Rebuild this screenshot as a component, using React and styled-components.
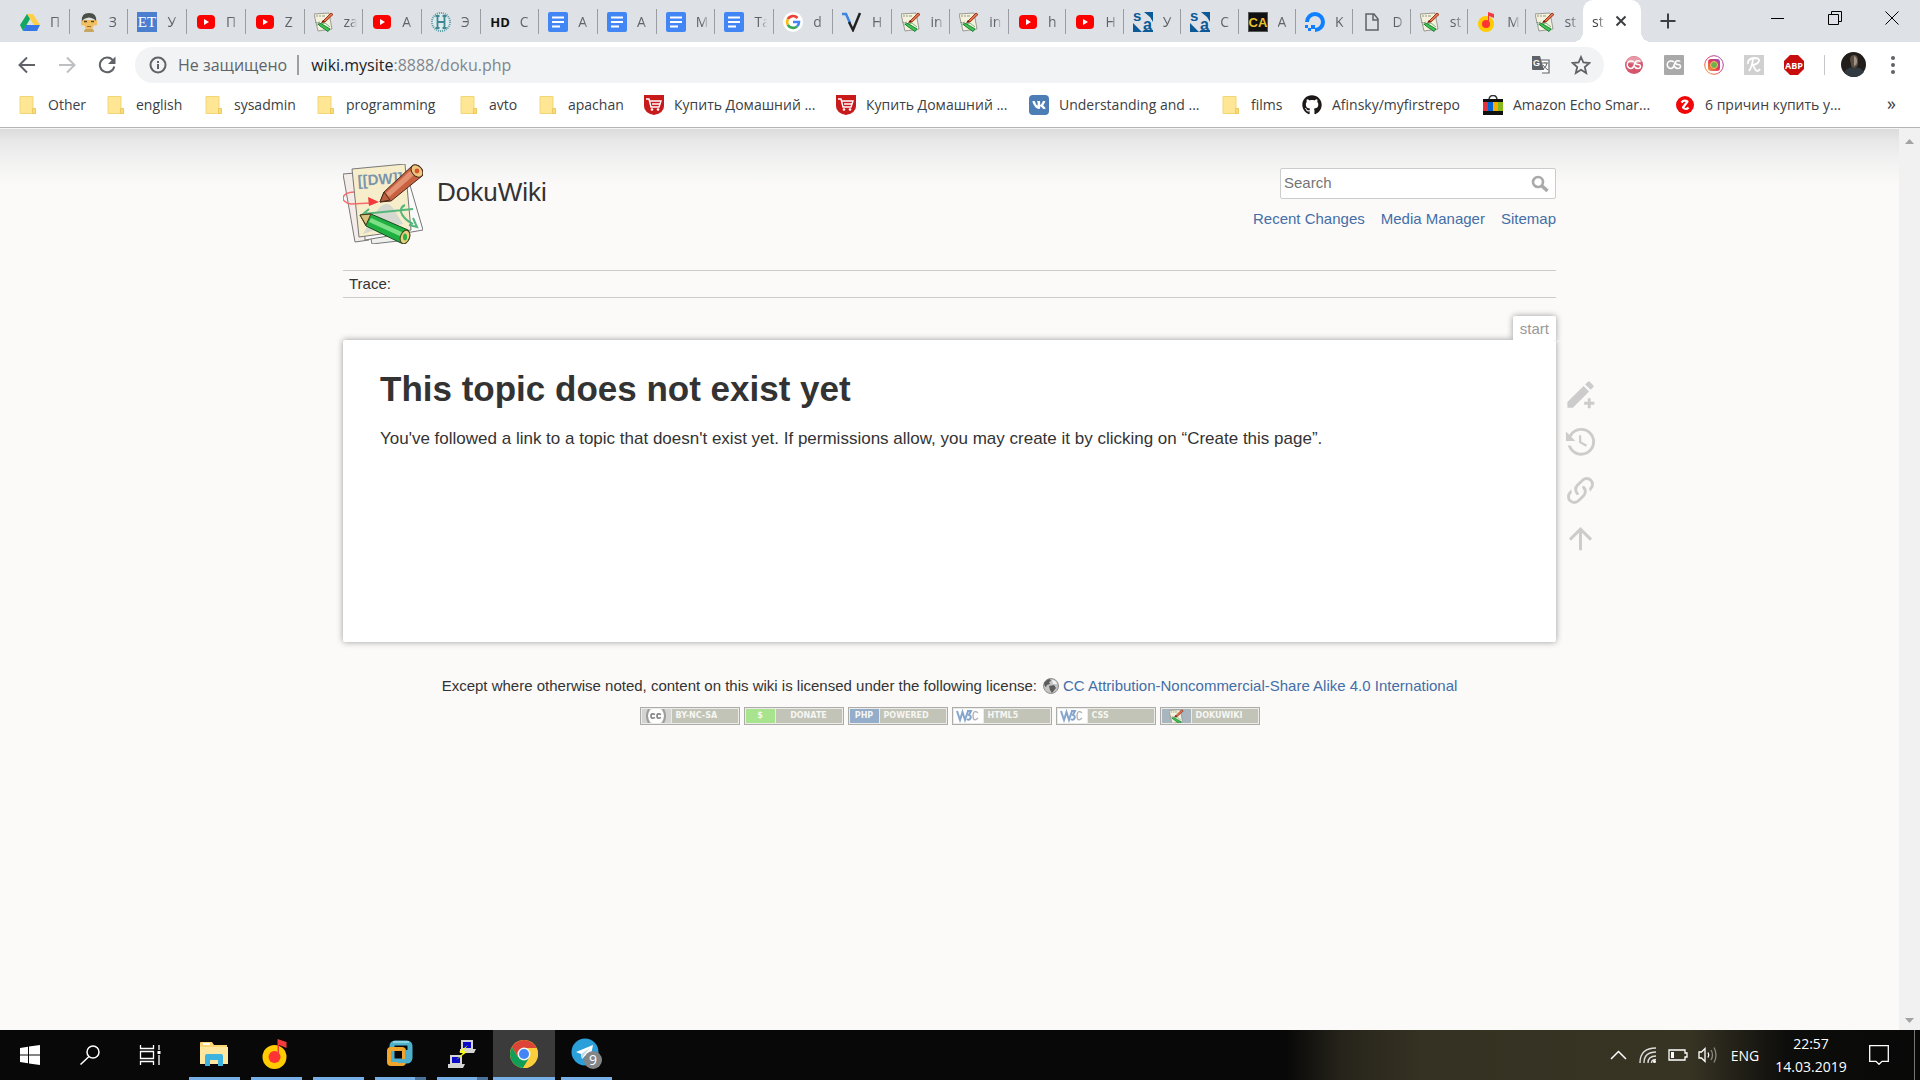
import React from "react";
import styled, { createGlobalStyle, css } from "styled-components";
import { FaGithub, FaVk } from "react-icons/fa";

const ui = `"Segoe UI", "Open Sans", "Noto Sans", sans-serif`;
const wiki = `Arial, "Liberation Sans", sans-serif`;

const GlobalStyle = createGlobalStyle`
  *, *::before, *::after { box-sizing: border-box; }
  body { margin: 0; background: #fbfaf9; }
  button { border: 0; padding: 0; background: none; font: inherit; color: inherit; }
  svg { display: block; flex: none; }
  h1, p { margin: 0; }
`;

/* ---------- window ---------- */

const Window = styled.div`
  display: flex;
  flex-direction: column;
  min-height: 100vh;
  font-family: ${ui};
  font-size: 14px;
`;

/* ---------- tab strip ---------- */

const TabStrip = styled.div`
  display: flex;
  height: 42px;
  padding-left: 11px;
  background: #dee1e6;
  color: #5f6368;
`;

const TabList = styled.div`
  flex: 1;
  min-width: 0;
  display: grid;
  grid-template-columns: repeat(17, minmax(0, 45fr)) repeat(10, minmax(0, 44fr));
`;

const Tab = styled.button`
  display: flex;
  align-items: center;
  gap: 10px;
  padding-left: 9px;
  margin: 9px 0 8px;
  border-right: 1px solid ${(p) => (p.$last ? "transparent" : "#9a9da1")};
  min-width: 0;
`;

const TabTitle = styled.span`
  width: 16px;
  white-space: nowrap;
  text-align: left;
  mask-image: linear-gradient(to right, #000 6px, transparent 13px);
`;

const ActiveTab = styled.div`
  position: relative;
  display: flex;
  align-items: center;
  justify-content: space-between;
  width: 58px;
  padding: 0 12px 0 9px;
  background: #fff;
  border-radius: 10px 10px 0 0;
  color: #3c4043;

  &::before, &::after {
    content: "";
    position: absolute;
    bottom: 0;
    width: 10px;
    height: 10px;
  }
  &::before { right: 100%; background: radial-gradient(circle at 0 0, transparent 10px, #fff 10px); }
  &::after { left: 100%; background: radial-gradient(circle at 100% 0, transparent 10px, #fff 10px); }
`;

const IconButton = styled.button`
  display: flex;
  align-items: center;
  justify-content: center;
  width: ${(p) => p.$w || 40}px;
  height: ${(p) => p.$h || 40}px;
  flex: none;
`;

const WindowControls = styled.div`
  display: flex;
  margin-left: 54px;
  color: #000;
`;

/* ---------- toolbar ---------- */

const Toolbar = styled.div`
  display: flex;
  align-items: center;
  height: 45px;
  padding: 0 7px;
  background: #fff;
  color: #5f6368;
`;

const Omnibox = styled.div`
  flex: 1;
  display: flex;
  align-items: center;
  height: 36px;
  margin: 0 10px 0 8px;
  padding: 0 3px 0 14px;
  border-radius: 18px;
  background: #f1f3f4;
  font-size: 16px;
`;

const Security = styled.span`
  margin-left: 11px;
  padding-right: 10px;
  border-right: 2px solid #9aa0a6;
  line-height: 20px;
`;

const Address = styled.span`
  flex: 1;
  margin-left: 12px;
  color: #80868b;
  b { font-weight: 400; color: #202124; }
`;

const Rule = styled.span`
  width: 1px;
  height: 20px;
  margin: 0 8px 0 10px;
  background: #c4c6c9;
`;

/* ---------- bookmarks ---------- */

const Bookmarks = styled.nav`
  display: flex;
  align-items: center;
  height: 41px;
  padding: 0 24px 5px 18px;
  background: #fff;
  border-bottom: 1px solid #b6b4b6;
  color: #3c4043;
`;

const Bookmark = styled.a`
  display: flex;
  align-items: center;
  gap: 10px;
  width: ${(p) => p.$w}px;
  color: inherit;
  text-decoration: none;
  white-space: nowrap;
`;

const More = styled.button`
  margin-left: auto;
  padding-bottom: 4px;
  font-size: 18px;
  line-height: 18px;
`;

/* ---------- page ---------- */

const Viewport = styled.div`
  flex: 1;
  display: flex;
`;

const Page = styled.div`
  flex: 1;
  display: grid;
  grid-template-columns: minmax(48px, 1fr) minmax(0, 1213px) minmax(48px, 1fr);
  grid-template-rows: auto auto 1fr;
  border-top: 1px solid #f4f4f4;
  background: linear-gradient(#dbdbdb 0, #e8e8e8 12px, #efefef 26px, #fbfaf9 56px);
  color: #333;
  font-family: ${wiki};
  font-size: 15px;
`;

const Header = styled.header`
  grid-column: 2;
  padding-top: 35px;
`;

const HeaderRow = styled.div`
  display: flex;
  justify-content: space-between;
  height: 106px;
`;

const Brand = styled.a`
  display: flex;
  gap: 14px;
  height: 81px;
  color: #333;
  text-decoration: none;
`;

const BrandName = styled.span`
  padding-top: 13px;
  font-size: 26px;
  line-height: 30px;
`;

const HeaderTools = styled.div`
  display: flex;
  flex-direction: column;
  align-items: flex-end;
  gap: 11px;
  padding-top: 4px;
`;

const SearchForm = styled.form`
  display: flex;
  align-items: center;
  width: 276px;
  height: 31px;
  border: 1px solid #ccc;
  border-radius: 2px;
  background: #fff;
`;

const SearchInput = styled.input`
  flex: 1;
  min-width: 0;
  padding: 0 0 2px 3px;
  border: 0;
  outline: 0;
  background: none;
  color: #333;
  font: 15px/18px ${wiki};
  &::placeholder { color: #757575; opacity: 1; }
`;

const linkColor = css`
  color: #436ea7;
  text-decoration: none;
`;

const SiteLinks = styled.nav`
  display: flex;
  gap: 16px;
  line-height: 18px;
  a { ${linkColor} }
`;

const Trace = styled.div`
  padding: 4px 6px;
  border: solid #ccc;
  border-width: 1px 0;
  line-height: 18px;
`;

const Main = styled.main`
  grid-column: 2;
  padding-top: 18px;
`;

const PageId = styled.div`
  position: relative;
  width: fit-content;
  margin-left: auto;
  padding: 2px 7px 0;
  height: 24px;
  border-radius: 2px 2px 0 0;
  background: #fff;
  box-shadow: 0 0 6px #999;
  clip-path: inset(-8px -8px 0 -8px);
  color: #999;
  line-height: 22px;
  z-index: 1;
`;

const Article = styled.article`
  min-height: 302px;
  padding: 29px 37px;
  border-radius: 2px;
  background: #fff;
  box-shadow: 0 0 6px #999;

  h1 { font-size: 35px; line-height: 40px; }
  p { margin-top: 18px; font-size: 17px; line-height: 24px; }
`;

const PageTools = styled.aside`
  grid-column: 3;
  display: flex;
  flex-direction: column;
  gap: 13px;
  padding: 79px 0 0 7px;
  color: #ccc;
`;

const ToolLink = styled.a`
  display: block;
  width: 35px;
  height: 35px;
  color: inherit;
`;

const Footer = styled.footer`
  grid-column: 2;
  padding-top: 33px;
  text-align: center;
`;

const License = styled.div`
  display: flex;
  justify-content: center;
  align-items: center;
  gap: 6px;
  line-height: 22px;
  a { ${linkColor} display: flex; align-items: center; gap: 4px; }
`;

const Badges = styled.div`
  display: flex;
  justify-content: center;
  gap: 4px;
  margin-top: 10px;
`;

const Badge = styled.a`
  display: flex;
  gap: 1px;
  width: 100px;
  height: 18px;
  padding: 1px;
  border: 1px solid #acacaa;
  background: #ecebe8;
  font: bold 8px/14px "DejaVu Sans", Verdana, sans-serif;
  color: #f6f6f2;
  text-decoration: none;
`;

const BadgeMark = styled.span`
  display: flex;
  align-items: center;
  justify-content: center;
  width: 29px;
  overflow: hidden;
  background: ${(p) => p.$bg};
`;

const BadgeText = styled.span`
  flex: 1;
  background: #c2c4b8;
  text-align: ${(p) => p.$align || "center"};
  padding: 0 4px;
`;

const Scrollbar = styled.div`
  display: flex;
  flex-direction: column;
  justify-content: space-between;
  width: 21px;
  background: #f1f1f1;
  color: #a3a3a3;
`;

/* ---------- taskbar ---------- */

const Taskbar = styled.footer`
  display: flex;
  align-items: stretch;
  height: 50px;
  background: linear-gradient(to right, #080808 67%, #27251b 70%, #353223 74%, #373424 88%, #0d0d0b 93%, #080808 100%);
  color: #fff;
`;

const Apps = styled.div`
  display: flex;
  margin-left: 3px;
`;

const AppButton = styled.button`
  display: flex;
  flex-direction: column;
  align-items: center;
  width: 62px;
  background: ${(p) => (p.$active ? "#3b3b3b" : "none")};
`;

const AppIcon = styled.span`
  flex: 1;
  display: flex;
  align-items: center;
`;

const AppLine = styled.span`
  width: ${(p) => (p.$wide ? 62 : 51)}px;
  height: 3px;
  background: ${(p) => (p.$stacked ? "linear-gradient(to right, #76b0e6 40px, #4b7399 40px)" : "#76b0e6")};
`;

const Tray = styled.div`
  display: flex;
  margin-left: auto;
`;

const Language = styled.button`
  width: 44px;
`;

const Clock = styled.button`
  width: 88px;
  line-height: 23px;
  text-align: center;
`;

const ShowDesktop = styled.button`
  width: 6px;
  margin-left: 11px;
  border-left: 1px solid #77756e;
`;

/* ---------- drawings ---------- */

const DokuLogo = ({ size = 80 }) => (
  <svg width={size} height={size} viewBox="0 0 80 80">
    <path d="M0 10 L12 9 L26 76 L12 78 Z" fill="#f3ece9" stroke="#777" />
    <path d="M27 70 L62 67 L64 76 L29 80 Z" fill="#eef0ec" stroke="#777" />
    <path d="M20 6 L62 4 L80 66 L22 76 Z" fill="#fafafa" stroke="#777" />
    <path d="M9 5 L62 0 L68 66 L16 73 Z" fill="#f6edcb" stroke="#777" />
    <path d="M36 44 Q44 36 50 44 L60 60 L38 64 L20 70 Z" fill="#d5d8cf" />
    <text x="15" y="22" fontFamily="Liberation Sans" fontWeight="bold" fontSize="15" fill="#7b95ab" transform="rotate(-4 15 22)">[[DW]]</text>
    <path d="M11 28 C-3 29 -3 38 8 40 L28 39" fill="none" stroke="#f56a6a" strokeWidth="1.500" />
    <path d="M25 33 L36 38 L26 42 Z" fill="#f23a3a" />
    <path d="M20 50 L70 45 M62 41 C52 46 62 56 70 60 M70 54 L74 63 L66 61 M26 45 L19 51" fill="none" stroke="#55b67c" strokeWidth="2" />
    <path d="M37 38 L41 28 L69 2 C75 -2 83 7 79 12 L48 37 Z" fill="#c8613f" stroke="#4a2a1c" />
    <path d="M43 29 L67 7 L71 11 L46 33 Z" fill="#e39373" />
    <path d="M37 38 L41 28 L47 36 Z" fill="#b9603f" stroke="#4a2a1c" />
    <ellipse cx="74" cy="7" rx="5" ry="7" fill="#ecc780" stroke="#4a2a1c" transform="rotate(-40 74 7)" />
    <circle cx="74" cy="7" r="2.400" fill="#d4562b" />
    <path d="M17 51 L28 50 L65 66 C69 72 66 80 58 79 L23 62 Z" fill="#1eb141" stroke="#1b4a22" />
    <path d="M28 54 L61 69 L59 73 L26 58 Z" fill="#7ddf86" />
    <path d="M17 51 L28 50 L23 61 Z" fill="#d9c27d" stroke="#4a3a1c" />
    <ellipse cx="62" cy="73" rx="4.500" ry="7" fill="#efcf7d" stroke="#3a4a1c" transform="rotate(20 62 73)" />
    <ellipse cx="62" cy="73" rx="2" ry="3.500" fill="#26b345" />
  </svg>
);

const DokuIcon = ({ size = 20 }) => (
  <svg width={size} height={size} viewBox="0 0 20 20">
    <path d="M0 2l15-1 3 16-14 2z" fill="#f4f1dc" stroke="#86867c" strokeWidth="0.800" />
    <path d="M2 4h2M5 4h2M8 4h3M1 10q2 2 5 0" fill="none" stroke="#8d9a86" />
    <path d="M3 13l8-2 5 4" fill="none" stroke="#77b98b" />
    <path d="M8 10L17 1l2 1.500L11 10z" fill="#e0764f" stroke="#9b2d12" strokeWidth="0.900" />
    <path d="M7 11l2-3 2 2z" fill="#7a1d0c" />
    <path d="M4 12l3-.5 9 5.500-2 2.500L6 14z" fill="#3fc153" stroke="#157a2a" strokeWidth="0.900" />
  </svg>
);

const Drive = () => (
  <svg width="20" height="20" viewBox="0 0 20 20">
    <path d="M7 2h6l7 11h-6z" fill="#ffcf48" />
    <path d="M7 2l3 5-7 12-3-6z" fill="#11a861" />
    <path d="M6 13h14l-3 6H3z" fill="#3777e3" />
  </svg>
);

const Face = () => (
  <svg width="20" height="20" viewBox="0 0 20 20">
    <path d="M5 20q0-4 5-4t5 4z" fill="#c9a660" />
    <path d="M2 8h16v5q-2 1-3 0l-2 4H7l-2-4q-1 1-3 0z" fill="#f0bf62" />
    <path d="M3 9q-1-8 7-8t7 8q-2-3-7-3.500Q5 6 3 9z" fill="#4b4f4a" />
    <path d="M5 9.500h3M12 9.500h3" stroke="#57431c" strokeWidth="1.500" />
    <path d="M8 14.500h4" stroke="#9a6a2a" />
  </svg>
);

const LetterIcon = ({ text, bg, fg, family, size = 12, bold, dotted }) => (
  <svg width="20" height="20" viewBox="0 0 20 20">
    <rect width="20" height="20" fill={bg} />
    {dotted && <rect x="0.500" y="0.500" width="19" height="19" fill="none" stroke="#999" strokeDasharray="1 1" />}
    <text x="10" y="15" fontSize={size} fontFamily={family} fontWeight={bold ? "bold" : "normal"} fill={fg} textAnchor="middle">{text}</text>
  </svg>
);

const YouTube = () => (
  <svg width="20" height="20" viewBox="0 0 20 20">
    <rect x="1" y="3" width="18" height="14" rx="4" fill="#f00" />
    <path d="M8 7l5 3-5 3z" fill="#fff" />
  </svg>
);

const Habr = () => (
  <svg width="20" height="20" viewBox="0 0 20 20">
    <circle cx="10" cy="10" r="9" fill="#dfeaec" stroke="#5b9aa5" strokeWidth="2" strokeDasharray="1 1" />
    <path d="M6.500 4v12M13.500 4v12M6.500 10h7M4.500 4h4M11.500 4h4M4.500 16h4M11.500 16h4" stroke="#3d8793" strokeWidth="1.800" />
  </svg>
);

const Docs = () => (
  <svg width="20" height="20" viewBox="0 0 20 20">
    <rect width="20" height="20" rx="2" fill="#4285f4" />
    <path d="M4 5.500h12M4 10h12M4 14.500h8" stroke="#fff" strokeWidth="2" />
  </svg>
);

const Google = () => (
  <svg width="20" height="20" viewBox="0 0 20 20" fill="none" strokeWidth="2.600">
    <circle cx="10" cy="10" r="10" fill="#fff" />
    <path d="M14.500 6A6 6 0 0 0 4.800 7.200" stroke="#ea4335" />
    <path d="M4.800 7.200A6 6 0 0 0 4.800 12.800" stroke="#fbbc05" />
    <path d="M4.800 12.800A6 6 0 0 0 14 14.400" stroke="#34a853" />
    <path d="M14 14.400A6 6 0 0 0 16 10H10" stroke="#4285f4" />
  </svg>
);

const Check = () => (
  <svg width="20" height="20" viewBox="0 0 20 20" fill="none" strokeWidth="2.500">
    <path d="M0 2h4l4 9" stroke="#3a86e0" />
    <path d="M7 10l4 8L18 1" stroke="#222" />
  </svg>
);

const Sa = () => (
  <svg width="20" height="20" viewBox="0 0 20 20">
    <path d="M11 0h9v10l-3-5zM0 11l4 4 5 5H0z" fill="#0b5a97" />
    <path d="M9 20l2-2h9v2z" fill="#0b5a97" />
    <text x="0" y="9" fontSize="15" fontWeight="bold" fontFamily="Liberation Sans" fill="#0b5a97">s</text>
    <text x="10" y="18" fontSize="16" fontWeight="bold" fontFamily="Liberation Sans" fill="#0b5a97">a</text>
  </svg>
);

const Ocean = () => (
  <svg width="20" height="20" viewBox="0 0 20 20">
    <path d="M2 10a8 8 0 1 1 8 8" fill="none" stroke="#0f80ff" strokeWidth="4" />
    <path d="M6 13h4v4H6zM3 16h3v3H3zM0 13h3v3H0z" fill="#0f80ff" />
  </svg>
);

const FileIcon = () => (
  <svg width="20" height="20" viewBox="0 0 20 20" fill="none" stroke="#5f6368" strokeWidth="1.500">
    <path d="M4 2h8l4 5v11H4zM11 2v6h5" />
  </svg>
);

const Music = ({ size = 20 }) => (
  <svg width={size} height={size} viewBox="0 0 20 20">
    <circle cx="9" cy="12" r="8" fill="#fc0" />
    <circle cx="9" cy="12" r="4" fill="#f33" />
    <path d="M11 12V0l6 2v4l-5-2v8z" fill="#f33b3b" />
  </svg>
);

const Folder = () => (
  <svg width="20" height="20" viewBox="0 0 20 20">
    <path d="M2 1.500h13v12h2V18.500H2z" fill="#ffe694" stroke="#f2d675" />
    <path d="M14.500 18.500v-5h3v5z" fill="#fbdc78" stroke="#ebc95c" />
  </svg>
);

const Cart = () => (
  <svg width="20" height="20" viewBox="0 0 20 20">
    <path d="M0 0h20v11q0 7-10 9Q0 18 0 11z" fill="#c8191b" />
    <path d="M2 4h3l2 8h8l2-6H6M8 9h8" fill="none" stroke="#fff" strokeWidth="1.400" />
    <circle cx="8" cy="14.500" r="1.300" fill="#fff" />
    <circle cx="14" cy="14.500" r="1.300" fill="#fff" />
  </svg>
);

const Vk = () => (
  <svg width="20" height="20" viewBox="0 0 20 20">
    <rect width="20" height="20" rx="4" fill="#4d7db5" />
    <FaVk x="3" y="3" width="14" height="14" color="#fff" />
  </svg>
);

const Bag = () => (
  <svg width="20" height="20" viewBox="0 0 20 20">
    <path d="M6 5q0-4.500 4-4.500T14 5" fill="none" stroke="#333" strokeWidth="1.400" />
    <path d="M0 4h20v16H0z" fill="#111" />
    <path d="M0 7h5v9H0z" fill="#e53238" />
    <path d="M5 7h5v9H5z" fill="#0064d2" />
    <path d="M10 7h5v9h-5z" fill="#f5af02" />
    <path d="M15 7h5v9h-5z" fill="#86b817" />
  </svg>
);

const RedZ = () => (
  <svg width="20" height="20" viewBox="0 0 20 20">
    <circle cx="10" cy="10" r="9" fill="#f00808" />
    <path d="M6.500 7.500Q9 4.500 12.500 6.500L8 12.500Q11 15.500 13.500 12.500" fill="none" stroke="#fff" strokeWidth="2.200" strokeLinejoin="round" />
  </svg>
);

const Stroke = ({ size = 20, w = 2, box = 24, children, color = "currentColor" }) => (
  <svg width={size} height={size} viewBox={`0 0 ${box} ${box}`} fill="none" stroke={color} strokeWidth={w}>
    {children}
  </svg>
);

const Fill = ({ size, d }) => (
  <svg width={size} height={size} viewBox="0 0 24 24" fill="currentColor"><path d={d} /></svg>
);

const Translate = () => (
  <svg width="20" height="20" viewBox="0 0 20 20">
    <path d="M9 5h9v13h-7" fill="#fff" stroke="#5f6368" strokeWidth="1.200" />
    <path d="M1 1h8l4 14H2q-1 0-1-1z" fill="#5f6368" />
    <text x="2" y="11" fontSize="9" fontWeight="bold" fontFamily="Liberation Sans" fill="#fff">G</text>
    <path d="M11 8h6M14 7v1M16 8q-1 5-4 6M12 10q2 3 5 5" fill="none" stroke="#5f6368" />
  </svg>
);

const Lastfm = ({ round }) => (
  <svg width="20" height="20" viewBox="0 0 20 20">
    {round ? <circle cx="10" cy="10" r="9" fill="#d4566c" /> : <rect width="20" height="20" rx="1" fill="#a9a9a9" />}
    {round && <path d="M2 7a8.500 8.500 0 0 1 16 0q-8 3-16 0z" fill="#e59aa6" />}
    <path d="M10 7q-1-1-3-1a3.500 3.500 0 1 0 0 7.500q2 0 3-3t1-3q1-1.800 3-1.800 2 0 2 1M10 11q1.500 2.500 4 2.500 2.500 0 2.500-2t-2.500-2q-2.500 0-2.500-1.800 0-2 2.500-2" fill="none" stroke="#fff" strokeWidth="1.500" />
  </svg>
);

const Insta = () => (
  <svg width="20" height="20" viewBox="0 0 20 20">
    <defs>
      <linearGradient id="ig" x1="0" y1="1" x2="1" y2="0">
        <stop offset="0" stopColor="#f5a13a" />
        <stop offset="0.5" stopColor="#e5375e" />
        <stop offset="1" stopColor="#8d4bc4" />
      </linearGradient>
    </defs>
    <circle cx="10" cy="10" r="9.300" fill="#fff" stroke="url(#ig)" />
    <rect x="4" y="4" width="12" height="12" rx="3" fill="url(#ig)" />
    <circle cx="10" cy="10" r="3.500" fill="#6fae4c" stroke="#f7c15a" />
  </svg>
);

const Script = () => (
  <svg width="20" height="20" viewBox="0 0 20 20">
    <rect width="20" height="20" fill="#d0d0d0" />
    <path d="M9 4q-1 8-4 12M4 9q-1-5 6-6 6 0 5 3-1 3-6 4 2 5 4 6 2 0 3-2" fill="none" stroke="#fff" strokeWidth="1.800" />
  </svg>
);

const Abp = () => (
  <svg width="20" height="20" viewBox="0 0 20 20">
    <path d="M6 0h8l6 6v8l-6 6H6l-6-6V6z" fill="#c70d0d" />
    <text x="10" y="13.500" textAnchor="middle" fontSize="9" fontWeight="bold" fontFamily="Open Sans" fill="#fff">ABP</text>
  </svg>
);

const Avatar = () => (
  <svg width="25" height="25" viewBox="0 0 25 25">
    <circle cx="12.500" cy="12.500" r="12.500" fill="#211d1a" />
    <path d="M9 8q0-5 4-5t4 5v4q-1 4-4 4t-3-4z" fill="#5b4f45" />
    <path d="M13 4q3 1 3 5t-3 5z" fill="#a39384" />
    <path d="M3 20q5-6 10-4 6-2 10 4-4 5-10 5T3 20z" fill="#303a40" />
  </svg>
);

const Magnifier = () => (
  <svg width="18" height="18" viewBox="0 0 18 18" fill="none" stroke="#aaa">
    <circle cx="7" cy="7" r="5" strokeWidth="2.600" />
    <path d="M11 11l5.500 5" strokeWidth="3.600" />
  </svg>
);

const Globe = () => (
  <svg width="16" height="16" viewBox="0 0 16 16">
    <circle cx="8" cy="8" r="7.500" fill="#c4c4c4" stroke="#909090" />
    <path d="M1 5q3-4 6-4l1 2-2 1 1 2-3 1-1 2Q1 8 1 5zM6 8l5-1 2 3-4 5-2-3z" fill="#5c5c5c" />
    <path d="M9 2q4 0 5 4l-4 0z" fill="#f2f2f2" />
  </svg>
);

const CcMark = () => (
  <svg width="24" height="14" viewBox="0 0 24 14">
    <circle cx="12" cy="7" r="8" fill="#fff" />
    <path d="M5 0q-4 7 0 14M19 0q4 7 0 14" fill="none" stroke="#9d9d9d" strokeWidth="2" />
    <path d="M11 5.500q-4-2-4 1.500t4 1.500M17 5.500q-4-2-4 1.500t4 1.500" fill="none" stroke="#888" strokeWidth="1.800" />
  </svg>
);

const W3c = () => (
  <svg width="24" height="14" viewBox="0 0 24 14" fill="none">
    <path d="M1 2l3 9 2.500-8L9 11l3-9M11 2h4l-2 4q3 1 1 4-1.500 1.500-3 0" stroke="#86a5cc" strokeWidth="2" />
    <path d="M22 4q-3-3-4.500 0-1 3 0 6 1.500 2 4.500-1" stroke="#b4b4b4" strokeWidth="1.400" />
  </svg>
);

const WinLogo = () => (
  <svg width="20" height="20" viewBox="0 0 20 20" fill="#fff">
    <path d="M0 3l8-1.200V9.500H0zM9 1.600L20 0v9.500H9zM0 10.500h8v7.700L0 17zM9 10.500h11V20L9 18.400z" />
  </svg>
);

const TaskView = () => (
  <svg width="22" height="20" viewBox="0 0 22 20" fill="none" stroke="#fff" strokeWidth="1.300">
    <path d="M1.500 0v3.500h13V0M1.500 20v-3.500h13V20M1.500 6.500h13v7h-13zM20 0v5M20 10v10" />
    <path d="M18.500 6h3v3h-3z" fill="#fff" stroke="none" />
  </svg>
);

const Explorer = () => (
  <svg width="28" height="24" viewBox="0 0 28 24">
    <path d="M0 1q0-1 1-1h11l2 3h13v19H0z" fill="#fbd673" />
    <path d="M3 1h7v2H3z" fill="#fff" />
    <path d="M0 5h28v17H0z" fill="#ffe79f" />
    <path d="M5 24v-10q0-2 2-2h14q2 0 2 2v10h-5v-6H10v6z" fill="#3fb3df" />
  </svg>
);

const Vmware = () => (
  <svg width="28" height="28" viewBox="0 0 28 28" fill="none">
    <rect x="6" y="3" width="18" height="18" rx="3" stroke="#4fb0cb" strokeWidth="5" />
    <path d="M7 2h16" stroke="#8bd3e4" strokeWidth="2" />
    <rect x="3" y="9" width="15" height="15" rx="2" stroke="#f0a62d" strokeWidth="4" />
    <path d="M21 10v11H12" stroke="#4fb0cb" strokeWidth="4" />
  </svg>
);

const Putty = () => (
  <svg width="28" height="28" viewBox="0 0 28 28">
    <path d="M13 0h12v9H13zM12 9h16l-2 4H12z" fill="#d4d4d4" />
    <path d="M15 2h8v6h-8z" fill="#0a0ac8" />
    <path d="M2 15h12v9H2zM0 24h17l-2 4H0z" fill="#d4d4d4" />
    <path d="M4 17h8v6H4z" fill="#0a0ac8" />
    <path d="M20 5l-9 7 4 1-7 7 11-8-4-1z" fill="#ff0" />
  </svg>
);

const Chrome = () => (
  <svg width="28" height="28" viewBox="0 0 28 28">
    <circle cx="14" cy="14" r="14" fill="#fbc835" />
    <path d="M1.900 7A14 14 0 0 1 26.100 7L26.100 8H14L8 17z" fill="#db4437" />
    <path d="M1.900 7A14 14 0 0 0 13 28L20 17.500 8 17z" fill="#109d58" />
    <path d="M14 8h12.600A14 14 0 0 1 13 28l6-10z" fill="#fbcd3c" />
    <circle cx="14" cy="14" r="6.500" fill="#f4f4f4" />
    <circle cx="14" cy="14" r="5" fill="#4385f5" />
  </svg>
);

const Telegram = () => (
  <svg width="31" height="31" viewBox="0 0 31 31">
    <circle cx="14" cy="14" r="13.500" fill="#2b9fd9" />
    <path d="M5 14l17-7-3 15-5-4-3 3-1-5z" fill="#fff" />
    <path d="M10 16l9-6-6 7-2 4z" fill="#c3dbea" />
    <circle cx="22" cy="22" r="9" fill="#838587" />
    <text x="22" y="27" textAnchor="middle" fontSize="14" fontFamily="Open Sans" fill="#fff">9</text>
  </svg>
);

const Wifi = () => (
  <svg width="18" height="18" viewBox="0 0 18 18" fill="none" stroke="#ddd" strokeWidth="1.400">
    <path d="M1 17Q1 2 17 2M5 17Q5 6 17 6M9 17q0-7 8-7M12.500 17q0-3.500 4.500-3.500" />
    <circle cx="15.500" cy="15.500" r="1.500" fill="#fff" stroke="none" />
  </svg>
);

const Battery = () => (
  <svg width="20" height="12" viewBox="0 0 20 12" fill="none" stroke="#fff" strokeWidth="1.300">
    <path d="M1 1h16v3h2v4h-2v3H1z" />
    <path d="M3 3h3v6H3z" fill="#fff" stroke="none" />
  </svg>
);

const Sound = () => (
  <svg width="20" height="18" viewBox="0 0 20 18" fill="none" stroke="#fff" strokeWidth="1.300">
    <path d="M1 6h2.500L7 2.500v13L3.500 12H1z" />
    <path d="M10 6.500q1.500 2.500 0 5" />
    <path d="M13 4q3 5 0 10M16 1.500q4 7.500 0 15" stroke="#8a8880" />
  </svg>
);

/* ---------- data ---------- */

const et = <LetterIcon text="ET" bg="#4a7fd0" fg="#fff" family="Liberation Serif" size={15} />;
const hd = <LetterIcon text="HD" bg="none" fg="#111" family="Open Sans" size={13} bold />;
const ca = <LetterIcon text="CA" bg="#111" fg="#e8c22c" family="Liberation Sans" size={13} bold dotted />;

const tabs = [
  [<Drive />, "П"], [<Face />, "З"], [et, "У"], [<YouTube />, "П"], [<YouTube />, "Z"],
  [<DokuIcon />, "za"], [<YouTube />, "A"], [<Habr />, "Э"], [hd, "С"], [<Docs />, "A"],
  [<Docs />, "A"], [<Docs />, "M"], [<Docs />, "Ta"], [<Google />, "d"], [<Check />, "H"],
  [<DokuIcon />, "in"], [<DokuIcon />, "in"], [<YouTube />, "h"], [<YouTube />, "H"], [<Sa />, "У"],
  [<Sa />, "C"], [ca, "A"], [<Ocean />, "K"], [<FileIcon />, "D"], [<DokuIcon />, "st"],
  [<Music />, "M"], [<DokuIcon />, "st"],
];

const bookmarks = [
  [<Folder />, "Other", 88], [<Folder />, "english", 98], [<Folder />, "sysadmin", 112],
  [<Folder />, "programming", 143], [<Folder />, "avto", 79], [<Folder />, "apachan", 106],
  [<Cart />, "Купить Домашний ...", 192], [<Cart />, "Купить Домашний ...", 193],
  [<Vk />, "Understanding and ...", 192], [<Folder />, "films", 81],
  [<FaGithub size={20} color="#1b1817" />, "Afinsky/myfirstrepo", 181],
  [<Bag />, "Amazon Echo Smar...", 192], [<RedZ />, "6 причин купить у...", 190],
];

const tools = [
  ["Create this page", "M20.7 7c.4-.4.4-1 0-1.400l-2.300-2.300c-.4-.4-1-.4-1.400 0l-1.800 1.800L19 8.800zM3 17.200V21h3.800l7.200-7.200 3.900-3.900-3.800-3.700zM17 14.500h2v2.500h2.500v2H19v2.500h-2V19h-2.500v-2H17z"],
  ["Old revisions", "M11 7v5.110l4.710 2.790.790-1.280-4-2.370V7m0-5C8.970 2 5.910 3.920 4.270 6.770L2 4.500V11h6.500L5.750 8.250C6.960 5.730 9.500 4 12.500 4a7.500 7.500 0 0 1 7.500 7.500 7.500 7.500 0 0 1-7.500 7.500c-3.270 0-6.030-2.090-7.060-5h-2.100c1.100 4.030 4.770 7 9.160 7 5.240 0 9.500-4.250 9.500-9.500A9.500 9.500 0 0 0 12.500 2z"],
  ["Backlinks", "M10.590 13.410c.41.390.41 1.030 0 1.420-.39.390-1.030.390-1.420 0a5.003 5.003 0 0 1 0-7.070l3.540-3.540a5.003 5.003 0 0 1 7.070 0 5.003 5.003 0 0 1 0 7.070l-1.490 1.490c.01-.82-.12-1.640-.4-2.420l.47-.48a2.982 2.982 0 0 0 0-4.240 2.982 2.982 0 0 0-4.240 0l-3.530 3.530a2.982 2.982 0 0 0 0 4.240m2.820-4.240c.39-.39 1.030-.39 1.420 0a5.003 5.003 0 0 1 0 7.070l-3.540 3.540a5.003 5.003 0 0 1-7.070 0 5.003 5.003 0 0 1 0-7.070l1.490-1.490c-.01.82.12 1.640.4 2.430l-.47.470a2.982 2.982 0 0 0 0 4.240 2.982 2.982 0 0 0 4.240 0l3.530-3.530a2.982 2.982 0 0 0 0-4.240.973.973 0 0 1 0-1.420z"],
  ["Back to top", "M13 20h-2V8l-5.500 5.500-1.420-1.420L12 4.160l7.920 7.920-1.420 1.420L13 8z"],
];

const badges = [
  { name: "BY-NC-SA", bg: "#d4d5d0", mark: <CcMark />, align: "left" },
  { name: "DONATE", bg: "#a8e48e", mark: "$" },
  { name: "POWERED", bg: "#94adcb", mark: "PHP", align: "left" },
  { name: "HTML5", bg: "#fff", mark: <W3c />, align: "left" },
  { name: "CSS", bg: "#fff", mark: <W3c />, align: "left" },
  { name: "DOKUWIKI", bg: "#a9b5bf", mark: <DokuIcon size={15} />, align: "left" },
];

const apps = [
  { name: "Explorer", icon: <Explorer /> },
  { name: "Music", icon: <Music size={30} /> },
  { name: "Background app", icon: null },
  { name: "VMware", icon: <Vmware />, stacked: true },
  { name: "PuTTY", icon: <Putty />, stacked: true },
  { name: "Chrome", icon: <Chrome />, active: true },
  { name: "Telegram", icon: <Telegram /> },
];

/* ---------- screen ---------- */

export default function App() {
  return (
    <Window>
      <GlobalStyle />
      <TabStrip>
        <TabList>
          {tabs.map(([icon, title], i) => (
            <Tab key={i} $last={i === tabs.length - 1}>
              {icon}
              <TabTitle>{title}</TabTitle>
            </Tab>
          ))}
        </TabList>
        <ActiveTab>
          <TabTitle>st</TabTitle>
          <IconButton $w={16} $h={16} aria-label="Close tab">
            <Stroke size={12} box={12} w={2}><path d="M1.500 1.500l9 9M10.500 1.500l-9 9" /></Stroke>
          </IconButton>
        </ActiveTab>
        <IconButton $w={54} $h={42} aria-label="New tab">
          <Stroke size={16} box={16} w={2} color="#3c4043"><path d="M8 0.500v15M0.500 8h15" /></Stroke>
        </IconButton>
        <WindowControls>
          <IconButton $w={57} $h={36} aria-label="Minimize">
            <Stroke size={13} box={13} w={1}><path d="M0 6.500h13" /></Stroke>
          </IconButton>
          <IconButton $w={57} $h={36} aria-label="Restore">
            <Stroke size={14} box={14} w={1}><path d="M0.500 3.500h10v10h-10zM3.500 3V0.500h10v10H11" /></Stroke>
          </IconButton>
          <IconButton $w={57} $h={36} aria-label="Close">
            <Stroke size={14} box={14} w={1}><path d="M0.500 0.500l13 13M13.500 0.500l-13 13" /></Stroke>
          </IconButton>
        </WindowControls>
      </TabStrip>

      <Toolbar>
        <IconButton aria-label="Back">
          <Stroke size={18} box={18} w={2}><path d="M17 9H2M9 1.500L1.500 9 9 16.500" /></Stroke>
        </IconButton>
        <IconButton aria-label="Forward">
          <Stroke size={18} box={18} w={2} color="#bdc0c3"><path d="M1 9h15M9 1.500L16.500 9 9 16.500" /></Stroke>
        </IconButton>
        <IconButton aria-label="Reload">
          <Stroke size={18} box={18} w={2}>
            <path d="M15 4.500A7.300 7.300 0 1 0 16.300 10.500" />
            <path d="M17.500 0.500v7.500H10z" fill="currentColor" stroke="none" />
          </Stroke>
        </IconButton>
        <Omnibox>
          <Stroke size={18} box={18} w={2}>
            <circle cx="9" cy="9" r="7.500" />
            <path d="M9 8v5M9 5v2" />
          </Stroke>
          <Security>Не защищено</Security>
          <Address><b>wiki.mysite</b>:8888/doku.php</Address>
          <IconButton $h={36} aria-label="Translate"><Translate /></IconButton>
          <IconButton $h={36} aria-label="Bookmark">
            <Stroke size={20} box={20} w={1.8}><path d="M10 2l2.400 5.500 6 .5-4.600 4 1.400 6L10 14.800 4.800 18l1.400-6L1.600 8l6-.5z" /></Stroke>
          </IconButton>
        </Omnibox>
        <IconButton aria-label="Scrobbler"><Lastfm round /></IconButton>
        <IconButton aria-label="Last.fm"><Lastfm /></IconButton>
        <IconButton aria-label="Instagram"><Insta /></IconButton>
        <IconButton aria-label="Script"><Script /></IconButton>
        <IconButton aria-label="Adblock"><Abp /></IconButton>
        <Rule />
        <IconButton aria-label="Profile"><Avatar /></IconButton>
        <IconButton aria-label="Menu">
          <svg width="4" height="18" viewBox="0 0 4 18" fill="#5f6368">
            <circle cx="2" cy="2" r="2" /><circle cx="2" cy="9" r="2" /><circle cx="2" cy="16" r="2" />
          </svg>
        </IconButton>
      </Toolbar>

      <Bookmarks>
        {bookmarks.map(([icon, name, w], i) => (
          <Bookmark key={i} href="#" $w={w}>{icon}{name}</Bookmark>
        ))}
        <More aria-label="More bookmarks">»</More>
      </Bookmarks>

      <Viewport>
        <Page>
          <Header>
            <HeaderRow>
              <Brand href="#">
                <DokuLogo />
                <BrandName>DokuWiki</BrandName>
              </Brand>
              <HeaderTools>
                <SearchForm>
                  <SearchInput type="text" placeholder="Search" aria-label="Search" />
                  <IconButton type="button" $w={30} $h={29} aria-label="Run search"><Magnifier /></IconButton>
                </SearchForm>
                <SiteLinks>
                  <a href="#">Recent Changes</a>
                  <a href="#">Media Manager</a>
                  <a href="#">Sitemap</a>
                </SiteLinks>
              </HeaderTools>
            </HeaderRow>
            <Trace>Trace:</Trace>
          </Header>
          <Main>
            <PageId>start</PageId>
            <Article>
              <h1>This topic does not exist yet</h1>
              <p>You've followed a link to a topic that doesn't exist yet. If permissions allow, you may create it by clicking on “Create this page”.</p>
            </Article>
          </Main>
          <PageTools>
            {tools.map(([name, d]) => (
              <ToolLink key={name} href="#" aria-label={name}><Fill size={35} d={d} /></ToolLink>
            ))}
          </PageTools>
          <Footer>
            <License>
              <span>Except where otherwise noted, content on this wiki is licensed under the following license:</span>
              <a href="#"><Globe />CC Attribution-Noncommercial-Share Alike 4.0 International</a>
            </License>
            <Badges>
              {badges.map((b) => (
                <Badge key={b.name} href="#">
                  <BadgeMark $bg={b.bg}>{b.mark}</BadgeMark>
                  <BadgeText $align={b.align}>{b.name}</BadgeText>
                </Badge>
              ))}
            </Badges>
          </Footer>
        </Page>
        <Scrollbar>
          <IconButton $w={21} $h={26} aria-label="Scroll up">
            <svg width="9" height="5" viewBox="0 0 9 5" fill="currentColor"><path d="M0 5L4.500 0 9 5z" /></svg>
          </IconButton>
          <IconButton $w={21} $h={20} aria-label="Scroll down">
            <svg width="9" height="5" viewBox="0 0 9 5" fill="currentColor"><path d="M0 0l4.500 5L9 0z" /></svg>
          </IconButton>
        </Scrollbar>
      </Viewport>

      <Taskbar>
        <IconButton $w={60} $h={50} aria-label="Start"><WinLogo /></IconButton>
        <IconButton $w={60} $h={50} aria-label="Search Windows">
          <Stroke size={20} box={20} w={1.5}><circle cx="13" cy="7" r="6" /><path d="M9 11.500L0.500 19.500" /></Stroke>
        </IconButton>
        <IconButton $w={60} $h={50} aria-label="Task view"><TaskView /></IconButton>
        <Apps>
          {apps.map((a) => (
            <AppButton key={a.name} $active={a.active} aria-label={a.name}>
              <AppIcon>{a.icon}</AppIcon>
              <AppLine $wide={a.active} $stacked={a.stacked} />
            </AppButton>
          ))}
        </Apps>
        <Tray>
          <IconButton $w={30} $h={50} aria-label="Hidden icons">
            <Stroke size={17} box={17} w={1.5}><path d="M1 12l7.500-7.500L16 12" /></Stroke>
          </IconButton>
          <IconButton $w={30} $h={50} aria-label="Network"><Wifi /></IconButton>
          <IconButton $w={30} $h={50} aria-label="Battery"><Battery /></IconButton>
          <IconButton $w={30} $h={50} aria-label="Volume"><Sound /></IconButton>
          <Language>ENG</Language>
          <Clock>22:57<br />14.03.2019</Clock>
          <IconButton $w={48} $h={50} aria-label="Notifications">
            <Stroke size={20} box={20} w={1.3}><path d="M0.700 0.700h18.600v15.600H13l-3 3-3-3H0.700z" /></Stroke>
          </IconButton>
          <ShowDesktop aria-label="Show desktop" />
        </Tray>
      </Taskbar>
    </Window>
  );
}
